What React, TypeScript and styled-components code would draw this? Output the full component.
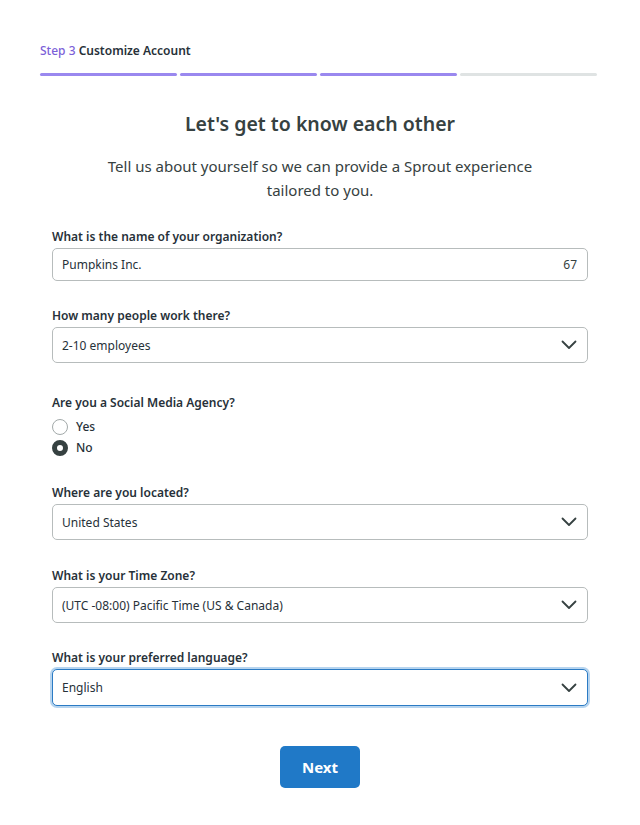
import React from 'react'
import styled, { createGlobalStyle } from 'styled-components'

const GlobalStyle = createGlobalStyle`
  body {
    margin: 0;
    background: #ffffff;
    font-family: "Noto Sans", "Open Sans", Arial, sans-serif;
    color: #273139;
  }
`

const Chevron = () => (
  <svg width="16" height="10" viewBox="0 0 16 10" fill="none">
    <path d="M1.5 1.5 L8 8 L14.5 1.5" stroke="#364141" strokeWidth="1.8" strokeLinecap="round" strokeLinejoin="round" />
  </svg>
)

const steps = [true, true, true, false]

const App = () => {
  return (
    <Page>
      <GlobalStyle />
      <Header>
        <StepText><StepNum>Step 3</StepNum> Customize Account</StepText>
        <Progress>
          {steps.map((done, i) => <Segment key={i} done={done} />)}
        </Progress>
      </Header>

      <Title>Let's get to know each other</Title>
      <Subtitle>Tell us about yourself so we can provide a Sprout experience<br />tailored to you.</Subtitle>

      <Form>
        <Field gap={26}>
          <Label>What is the name of your organization?</Label>
          <Input height={33}>
            <span>Pumpkins Inc.</span>
            <Count>67</Count>
          </Input>
        </Field>

        <Field gap={31}>
          <Label>How many people work there?</Label>
          <Input height={36}>
            <span>2-10 employees</span>
            <Chevron />
          </Input>
        </Field>

        <Field gap={28}>
          <Label>Are you a Social Media Agency?</Label>
          <RadioList>
            <RadioRow><Radio /><span>Yes</span></RadioRow>
            <RadioRow><Radio checked /><span>No</span></RadioRow>
          </RadioList>
        </Field>

        <Field gap={27}>
          <Label>Where are you located?</Label>
          <Input height={36}>
            <span>United States</span>
            <Chevron />
          </Input>
        </Field>

        <Field gap={26}>
          <Label>What is your Time Zone?</Label>
          <Input height={36}>
            <span>(UTC -08:00) Pacific Time (US &amp; Canada)</span>
            <Chevron />
          </Input>
        </Field>

        <Field gap={40}>
          <Label>What is your preferred language?</Label>
          <Input height={37} focused>
            <span>English</span>
            <Chevron />
          </Input>
        </Field>
      </Form>

      <Actions>
        <NextButton>Next</NextButton>
      </Actions>
    </Page>
  )
}

export default App

const Page = styled.div`
  width: 640px;
  padding: 42px 0 40px;
  box-sizing: border-box;
`
const Header = styled.div`
  padding: 0 43px 0 40px;
`
const StepText = styled.div`
  font-size: 12px;
  line-height: 18px;
  font-weight: 600;
  color: #273139;
`
const StepNum = styled.span`
  color: #7c5fd8;
  font-weight: 500;
`
const Progress = styled.div`
  display: flex;
  gap: 3px;
  margin-top: 13px;
`
const Segment = styled.div<{ done: boolean }>`
  flex: 1;
  height: 3px;
  border-radius: 2px;
  background: ${p => (p.done ? '#9a88ef' : '#dfe3e3')};
`
const Title = styled.h1`
  margin: 34px 0 0;
  text-align: center;
  font-size: 19.5px;
  line-height: 28px;
  font-weight: 600;
  color: #364141;
`
const Subtitle = styled.p`
  margin: 16px 0 0;
  text-align: center;
  font-size: 15px;
  line-height: 24px;
  color: #364141;
`
const Form = styled.div`
  width: 536px;
  margin: 26px auto 0;
`
const Field = styled.div<{ gap: number }>`
  display: flex;
  flex-direction: column;
  gap: 2px;
  margin-bottom: ${p => p.gap}px;
`
const Label = styled.label`
  font-size: 12px;
  line-height: 18px;
  font-weight: 600;
  color: #273139;
`
const Input = styled.div<{ height: number; focused?: boolean }>`
  height: ${p => p.height}px;
  box-sizing: border-box;
  display: flex;
  align-items: center;
  justify-content: space-between;
  padding: 0 10px 0 9px;
  border: 1px solid ${p => (p.focused ? '#2b7bc4' : '#b7bcbc')};
  border-radius: 5px;
  box-shadow: ${p => (p.focused ? '0 0 0 2px #b6d4ef' : 'none')};
  font-size: 12px;
  color: #273139;
  background: #fff;
`
const Count = styled.span`
  color: #364141;
  font-size: 12px;
`
const RadioList = styled.div`
  display: flex;
  flex-direction: column;
  gap: 5px;
  margin-top: 5px;
`
const RadioRow = styled.div`
  display: flex;
  align-items: center;
  gap: 8px;
  font-size: 12px;
  font-weight: 500;
  line-height: 16px;
  color: #273139;
`
const Radio = styled.span<{ checked?: boolean }>`
  width: 16px;
  height: 16px;
  box-sizing: border-box;
  border-radius: 50%;
  border: ${p => (p.checked ? '5px solid #364141' : '1px solid #a3aaaa')};
  background: #fff;
`
const Actions = styled.div`
  display: flex;
  justify-content: center;
`
const NextButton = styled.button`
  width: 80px;
  height: 42px;
  border: none;
  border-radius: 5px;
  background: #2079c7;
  color: #fff;
  font-family: inherit;
  font-size: 15px;
  font-weight: 700;
  cursor: pointer;
`
